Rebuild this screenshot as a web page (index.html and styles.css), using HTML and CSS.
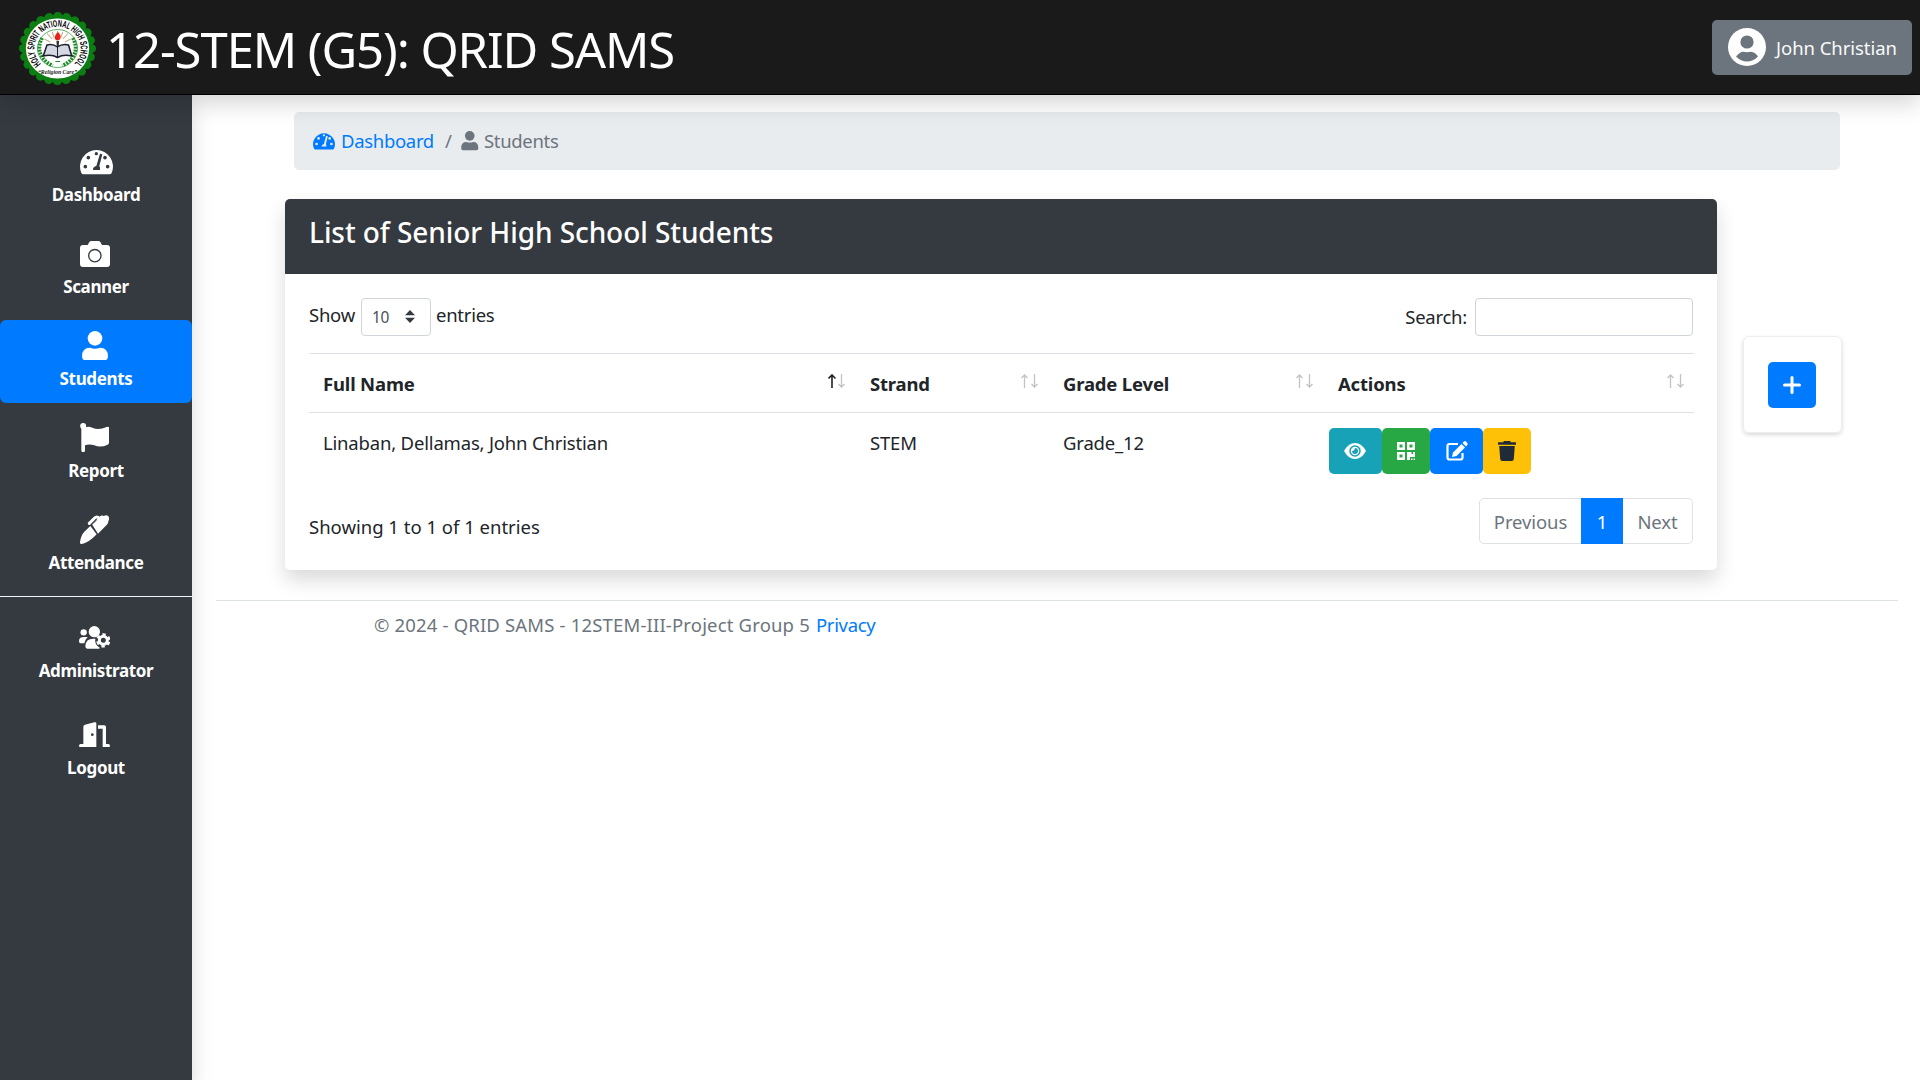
FILE: index.html
```html
<!DOCTYPE html>
<html lang="en">
<head>
<meta charset="utf-8">
<title>Students - QRID SAMS</title>
<link rel="stylesheet" href="styles.css">
</head>
<body>
<header class="topbar">
  <svg class="logo" viewBox="4 0 146 146" preserveAspectRatio="none">
    <circle cx="77" cy="73" r="68" fill="#0b7d12"/>
    <circle cx="77" cy="73" r="65" fill="none" stroke="#0b7d12" stroke-width="16" stroke-linecap="round" stroke-dasharray="0.1 16.917"/>
    <circle cx="77" cy="73" r="60" fill="#fff"/>
    <circle cx="77" cy="73" r="38" fill="none" stroke="#2f9a3a" stroke-width="1.5"/>
    <path id="arc" d="M46 104A43.800 43.800 0 1 1 108 104" fill="none"/>
    <text class="logo-name" textLength="205" lengthAdjust="spacingAndGlyphs"><textPath href="#arc" textLength="205" lengthAdjust="spacingAndGlyphs">HOLY SPIRIT NATIONAL HIGH SCHOOL</textPath></text>
    <path d="M48 52C37 72 43 96 68 107M106 52C117 72 111 96 86 107" fill="none" stroke="#1c8a28" stroke-width="7" stroke-dasharray="4 2"/>
    <path d="M77 56V38M67 54L57 43M87 54L97 43M63 60L52 54M91 60L102 54M71 52L67 40M83 52L87 40" stroke="#c9ad84" stroke-width="2"/>
    <path d="M75 58h5l-1 18h-3z" fill="#333"/>
    <path d="M78 40C86 48 83 57 77 57C71 57 69 48 78 40Z" fill="#e8231d"/>
    <path d="M57 66Q68 63 77 70Q86 63 98 66L104 88Q88 84 77 91Q66 84 50 88Z" fill="#d5d8e2" stroke="#20202c" stroke-width="3"/>
    <path d="M77 70V90" stroke="#20202c" stroke-width="2"/>
    <path d="M73 99h9" stroke="#1c8a28" stroke-width="2"/>
    <text class="logo-motto" x="77" y="125" text-anchor="middle">“Religion Care”</text>
  </svg>
  <h1 class="brand"><span class="t">12-STEM (G5): QRID SAMS</span></h1>
  <button class="user">
    <svg width="38" height="38" viewBox="0 0 38 38"><circle cx="19" cy="19" r="19" fill="#fff"/><circle cx="19" cy="14" r="6.600" fill="#6c757d"/><path d="M8 28.500Q12 23.700 15 23.700Q19 24.600 23 23.700Q27 24 30 28.500Q25 33.600 19 33.600Q13 33.600 8 28.500Z" fill="#6c757d"/></svg>
    <span class="t">John Christian</span>
  </button>
</header>
<div class="shell">
  <nav class="sidebar">
    <a class="item"><span class="ico wide"><svg width="33" height="26.300" viewBox="0 0 99 79"><path d="M10 79Q6 79 4 75A49.500 49.500 0 1 1 95 75Q93 79 89 79Z" fill="#fff"/><g fill="#343a40"><circle cx="25" cy="29" r="5.500"/><circle cx="49" cy="17" r="5"/><circle cx="75" cy="29" r="5.500"/><circle cx="16" cy="56" r="5.500"/><circle cx="83" cy="56" r="5.500"/><path d="M60 17L67 19L58 54Q61 57 60 66H39Q38 57 49 54Z"/></g></svg></span><span class="t">Dashboard</span></a>
    <a class="item"><span class="ico"><svg width="30" height="26" viewBox="0 0 90 78"><path d="M9 12H23L28 3Q30 0 34 0H55Q59 0 61 3L66 12H81Q90 12 90 21V69Q90 78 81 78H9Q0 78 0 69V21Q0 12 9 12Z" fill="#fff"/><circle cx="44.500" cy="44" r="18.500" fill="none" stroke="#343a40" stroke-width="4"/></svg></span><span class="t">Scanner</span></a>
    <a class="item active"><span class="ico"><svg width="26" height="29.300" viewBox="0 0 78 88"><circle cx="39" cy="22" r="22" fill="#fff"/><path d="M0 76Q0 50 24 50Q39 56 54 50Q78 50 78 76Q78 88 67 88H11Q0 88 0 76Z" fill="#fff"/></svg></span><span class="t">Students</span></a>
    <a class="item"><span class="ico"><svg width="29.300" height="29.300" viewBox="0 0 88 88"><circle cx="9.500" cy="9" r="9" fill="#fff"/><path d="M4 9H15V13Q26 9 39 15Q57 22 80 12Q88 9 88 17V58Q88 62 83 65Q62 75 43 67Q28 62 15 67V82Q15 88 9.500 88Q4 88 4 82Z" fill="#fff"/></svg></span><span class="t">Report</span></a>
    <a class="item"><span class="ico"><svg width="29.300" height="29.300" viewBox="0 0 88 88"><path d="M36 28L60 4Q66 -1 72 3Q79 -2 85 4Q91 11 85 18Q86 24 80 30L54 56ZM31 33L50 58Q28 82 6 87Q0 89 0 82Q2 62 13 50Z" fill="#fff"/><path d="M28 25L44 9Q49 4 54 7" fill="none" stroke="#fff" stroke-width="9" stroke-linecap="round"/><path d="M34 30L50 15" stroke="#343a40" stroke-width="3"/></svg></span><span class="t">Attendance</span></a>
    <hr class="split">
    <a class="item"><span class="ico"><svg width="31" height="23" viewBox="0 0 93 69"><g fill="#fff"><circle cx="14" cy="19" r="9.500"/><circle cx="46" cy="17" r="17"/><path d="M0 45Q0 33 14 33H26Q19 40 16 52H4Q0 52 0 45ZM19 60Q20 38 43 38H49Q45 54 63 66Q62 68 58 68H25Q19 68 19 60Z"/></g><circle cx="73" cy="43" r="12" fill="none" stroke="#fff" stroke-width="9"/><circle cx="73" cy="43" r="18" fill="none" stroke="#fff" stroke-width="7" stroke-dasharray="10 8.850" stroke-dashoffset="-4.400"/></svg></span><span class="t">Administrator</span></a>
    <a class="item last"><span class="ico"><svg width="31" height="25.300" viewBox="0 0 93 76"><path d="M52 4V76H5Q0 76 0 71Q0 66 5 66H13V14Q13 10 18 8L46 1Q52 0 52 4ZM57 10H76Q81 10 81 15V66H88Q93 66 93 71Q93 76 88 76H71V20H57Z" fill="#fff"/><circle cx="40" cy="38" r="4" fill="#343a40"/></svg></span><span class="t">Logout</span></a>
  </nav>
  <main class="content">
    <ol class="crumbs">
      <li class="crumb link"><svg width="22" height="17.500" viewBox="0 0 99 79"><path d="M10 79Q6 79 4 75A49.500 49.500 0 1 1 95 75Q93 79 89 79Z" fill="#007bff"/><g fill="#e9ecef"><circle cx="25" cy="29" r="6"/><circle cx="49" cy="15" r="5"/><circle cx="75" cy="29" r="6"/><circle cx="16" cy="54" r="6"/><circle cx="83" cy="54" r="6"/><path d="M59 17L67 19L58 54Q61 57 60 66H39Q38 57 49 54Z"/></g></svg><span class="t">Dashboard</span></li>
      <li class="slash"><span class="t">/</span></li>
      <li class="crumb here"><svg width="17.500" height="19.300" viewBox="0 0 78 88"><circle cx="39" cy="22" r="22" fill="#6c757d"/><path d="M0 76Q0 50 24 50Q39 56 54 50Q78 50 78 76Q78 88 67 88H11Q0 88 0 76Z" fill="#6c757d"/></svg><span class="t">Students</span></li>
    </ol>
    <div class="row">
      <section class="card">
        <h2 class="card-head"><span class="t">List of Senior High School Students</span></h2>
        <div class="card-body">
          <div class="tools">
            <div class="length"><span class="t">Show</span>
              <span class="select"><span class="t">10</span><svg width="10" height="13" viewBox="0 0 10 13"><path d="M0 5.300L5 0L10 5.300ZM0 7.700L5 13L10 7.700Z" fill="#343a40"/></svg></span>
              <span class="t">entries</span></div>
            <label class="search"><span class="t">Search:</span><input type="text"></label>
          </div>
          <table class="grid">
            <colgroup><col class="c-name"><col class="c-strand"><col class="c-grade"><col class="c-act"></colgroup>
            <thead><tr>
              <th><div class="th"><span class="t">Full Name</span><svg class="sort" viewBox="0 0 17 14"><path class="on" d="M4 14V1M.500 4.500L4 1L7.500 4.500"/><path d="M13.500 0V13M10.500 10L13.500 13L16.500 10"/></svg></div></th>
              <th><div class="th"><span class="t">Strand</span><svg class="sort" viewBox="0 0 17 14"><path d="M3.500 14V1M.500 4L3.500 1L6.500 4"/><path d="M13.500 0V13M10.500 10L13.500 13L16.500 10"/></svg></div></th>
              <th><div class="th"><span class="t">Grade Level</span><svg class="sort" viewBox="0 0 17 14"><path d="M3.500 14V1M.500 4L3.500 1L6.500 4"/><path d="M13.500 0V13M10.500 10L13.500 13L16.500 10"/></svg></div></th>
              <th><div class="th"><span class="t">Actions</span><svg class="sort" viewBox="0 0 17 14"><path d="M3.500 14V1M.500 4L3.500 1L6.500 4"/><path d="M13.500 0V13M10.500 10L13.500 13L16.500 10"/></svg></div></th>
            </tr></thead>
            <tbody><tr>
              <td><span class="t">Linaban, Dellamas, John Christian</span></td>
              <td><span class="t">STEM</span></td>
              <td><span class="t">Grade_12</span></td>
              <td class="acts"><div class="btns">
                <button class="btn view"><svg width="22" height="16" viewBox="0 0 22 16"><path d="M0 8Q4.500 0 11 0T22 8Q17.500 16 11 16T0 8Z" fill="#fff"/><circle cx="11" cy="8" r="5" fill="none" stroke="#17a2b8" stroke-width="1.500"/><path d="M11 5A3 3 0 1 1 8 8Q10.500 8 11 5Z" fill="#17a2b8"/></svg></button>
                <button class="btn code"><svg width="18" height="18" viewBox="0 0 18 18"><path fill-rule="evenodd" fill="#fff" d="M0 0H8V8H0ZM2.500 2.500V5.500H5.500V2.500ZM10 0H18V8H10ZM12.500 2.500V5.500H15.500V2.500ZM0 10H8V18H0ZM2.500 12.500V15.500H5.500V12.500ZM10 10H14.500V12H16V10H18V15H13V18H10ZM14 16.500H15.500V18H14ZM16.500 16.500H18V18H16.500Z"/></svg></button>
                <button class="btn edit"><svg width="22" height="20" viewBox="0 0 22 20"><path d="M12 3H3.500Q1.500 3 1.500 5V16.500Q1.500 18.500 3.500 18.500H14.500Q16.500 18.500 16.500 16.500V12" fill="none" stroke="#fff" stroke-width="2.200"/><path d="M7 11.500L15.500 3L19 6.500L10.500 15L6 16ZM16.500 2L18 .500Q19 -.300 20 .600L21.300 2Q22 3 21.300 4L20 5.500Z" fill="#fff"/></svg></button>
                <button class="btn drop"><svg width="18" height="20" viewBox="0 0 18 20"><path d="M0 1.300H5L6 0H12L13 1.300H18V3.700H0ZM1.200 5H16.800L15.800 18Q15.600 20 13.800 20H4.200Q2.400 20 2.200 18Z" fill="#212b38"/></svg></button>
              </div></td>
            </tr></tbody>
          </table>
          <div class="foot">
            <span class="t info">Showing 1 to 1 of 1 entries</span>
            <div class="pager"><a class="prev"><span class="t">Previous</span></a><a class="cur"><span class="t">1</span></a><a class="next"><span class="t">Next</span></a></div>
          </div>
        </div>
      </section>
      <aside class="add"><button class="plus"><svg width="18" height="18" viewBox="0 0 18 18"><path d="M9 1.500V16.500M1.500 9H16.500" stroke="#fff" stroke-width="3" stroke-linecap="round"/></svg></button></aside>
    </div>
    <footer class="page-foot"><span class="t copy">© 2024 - QRID SAMS - 12STEM-III-Project Group 5</span><a class="t privacy">Privacy</a></footer>
  </main>
</div>
</body>
</html>
```
FILE: styles.css
```css
* { box-sizing: border-box; }
body { margin: 0; height: 1080px; overflow: hidden; background: #fff; color: #212529; font: 18.5px/28px "Noto Sans", sans-serif; display: flex; flex-direction: column; }
.t { white-space: nowrap; }
h1, h2, ol { margin: 0; padding: 0; font-weight: 400; list-style: none; }
button { border: 0; padding: 0; font: inherit; color: inherit; }
svg { display: block; flex: none; }
.topbar { height: 95px; flex: none; background: #1a1a1a; display: flex; align-items: center; padding: 0 8px 0 19px; box-shadow: 0 10px 20px rgba(0,0,0,.15); position: relative; z-index: 2; border-bottom: 1px solid #000; color: #fff; }
.logo { width: 77px; height: 73px; margin-top: 3px; }
.logo-name { font: bold 19px "Liberation Sans Narrow", "Liberation Sans", sans-serif; fill: #000; }
.logo-motto { font: italic bold 11px "Liberation Serif", serif; fill: #222; }
.brand { font-size: 49px; line-height: 60px; margin: 3px 0 0 10px; letter-spacing: -1.07px; }
.user { margin-left: auto; width: 200px; height: 55px; border-radius: 5px; background: #6c757d; display: flex; align-items: center; padding-left: 16px; gap: 10px; color: #f8f9fa; }
.user .t { padding-top: 2px; letter-spacing: -.05px; }
.shell { flex: 1; display: flex; }
.sidebar { width: 192px; background: #343a40; padding-top: 41px; box-shadow: 0 10px 20px rgba(0,0,0,.15); display: flex; flex-direction: column; color: #fff; font-weight: 700; font-size: 17px; letter-spacing: -.36px; }
.item { height: 83px; margin-bottom: 9px; border-radius: 6px; display: flex; flex-direction: column; align-items: center; line-height: 26px; }
.item.active { background: #007bff; }
.ico { height: 41px; margin-top: 5px; display: flex; align-items: center; padding-right: 3px; }
.ico.wide { padding-right: 0; }
.split { border: 0; height: 1px; width: 100%; background: #f4f4f4; margin: 0 0 15px; }
.last { margin-top: 5px; }
.content { flex: 1; padding: 17px 22px 0 24px; display: flex; flex-direction: column; }
.crumbs { height: 58px; margin: 0 58px 0 78px; background: #e9ecef; border-radius: 5px; display: flex; align-items: center; padding-left: 19px; letter-spacing: -.32px; }
.crumb { display: flex; align-items: center; gap: 6px; }
.link { color: #007bff; }
.here, .slash { color: #6c757d; }
.here { gap: 5px; }
.slash { margin: 0 10px 0 11px; }
.row { display: flex; align-items: center; margin: 29px 56px 0 69px; justify-content: space-between; }
.card { width: 1432px; height: 371px; border-radius: 5px; box-shadow: 0 10px 20px rgba(0,0,0,.15); overflow: hidden; }
.card-head { height: 75px; background: #343a40; color: #fff; font-size: 28px; font-weight: 500; line-height: 66px; padding-left: 24px; letter-spacing: -.07px; }
.card-body { padding: 24px 23px 0 24px; }
.tools { display: flex; justify-content: space-between; height: 55px; padding-right: 1px; letter-spacing: -.25px; }
.length { display: flex; height: 33px; align-items: center; }
.select { width: 70px; height: 38px; border: 1px solid #ced4da; border-radius: 4px; margin: 4px 5px 0 6px; display: flex; align-items: center; justify-content: space-between; padding: 0 15px 0 10px; font-size: 15.5px; color: #495057; }
.search { display: flex; height: 38px; align-items: center; gap: 8px; }
.search input { width: 218px; height: 38px; border: 1px solid #ced4da; border-radius: 4px; }
.grid { width: 1385px; table-layout: fixed; border-collapse: separate; border-spacing: 0; letter-spacing: -.18px; }
.c-name { width: 546px; } .c-strand { width: 193px; } .c-grade { width: 275px; } .c-act { width: 371px; }
th { height: 60px; padding: 0; border: solid #dee2e6; border-width: 1px 0; text-align: left; }
.th { display: flex; justify-content: space-between; align-items: center; padding: 1px 10px 0 15px; }
.sort { width: 17px; height: 14px; margin-top: -5px; fill: none; stroke: #c3c3c3; stroke-width: 1.3; }
.sort .on { stroke: #222; stroke-width: 1.6; }
td { height: 76px; padding: 16px 0 0 15px; vertical-align: top; }
th:first-child .th, td:first-child { padding-left: 14px; }
td.acts { padding: 15px 0 0 6px; }
.btns { display: flex; }
.btn { height: 46px; width: 48px; border-radius: 5px; display: flex; align-items: center; justify-content: center; }
.view { width: 53px; background: #17a2b8; padding-right: 1px; } .code { background: #28a745; padding-right: 1px; } .edit { width: 53px; background: #007bff; } .drop { background: #ffc107; }
.foot { display: flex; justify-content: space-between; padding: 9px 1px 0 0; }
.info { margin-top: 15px; }
.pager { display: flex; height: 46px; border: 1px solid #dee2e6; border-radius: 5px; width: 214px; color: #6c757d; line-height: 46px; letter-spacing: -.1px; }
.pager a { text-align: center; }
.prev { width: 101px; } .next { flex: 1; }
.cur { width: 42px; background: #007bff; color: #fff; margin: -1px 0; line-height: 48px; }
.add { width: 99px; height: 97px; border-radius: 6px; border: 1px solid #eee; box-shadow: 0 2px 4px rgba(0,0,0,.15); display: flex; align-items: center; justify-content: center; padding-right: 1px; }
.plus { width: 48px; height: 46px; border-radius: 5px; background: #007bff; display: flex; align-items: center; justify-content: center; }
.page-foot { margin-top: 30px; border-top: 1px solid #dee2e6; padding: 10px 0 0 158px; color: #6c757d; display: flex; gap: 6px; }
.copy { letter-spacing: .17px; }
.privacy { color: #007bff; letter-spacing: -.3px; }
```
